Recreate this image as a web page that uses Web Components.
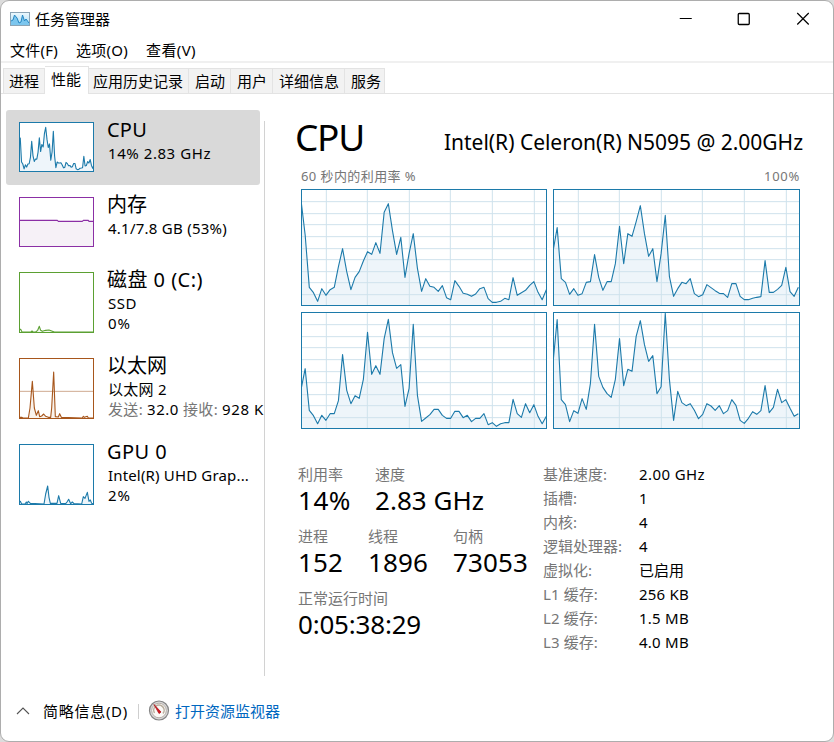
<!DOCTYPE html>
<html lang="zh-CN">
<head>
<meta charset="utf-8">
<title>任务管理器</title>
<style>
  body {
    margin: 0;
    background: #dcdcdc;
    font: 15px/20px "Noto Sans", "Noto Sans CJK SC", sans-serif;
    color: #000;
  }
</style>
</head>
<body>
<task-manager></task-manager>

<script>
// Samples of the last 60 seconds, one list for each logical processor.
// Counted downwards in thirds of a pixel, 13 is 100% and 361 is 0%
const cores = [
  [45,150,307,323,349,311,331,314,307,245,191,260,314,277,260,228,200,208,173,205,
   82,56,137,208,157,277,205,146,250,319,281,304,307,319,302,338,344,287,304,325,
   328,334,327,311,307,341,352,352,349,340,344,278,331,323,316,301,290,322,344,314],
  [200,128,281,292,328,311,331,326,292,290,209,277,316,290,290,236,124,236,146,154,
   110,62,146,214,191,290,206,91,275,334,311,292,296,281,326,335,329,299,308,317,
   325,326,337,296,296,334,344,344,340,337,335,227,322,322,313,301,247,320,334,307],
  [245,182,307,323,347,322,337,317,317,278,140,247,287,263,271,214,73,199,173,199,
   92,34,134,181,170,295,241,49,262,340,330,320,304,304,322,331,331,310,310,329,
   322,341,331,331,317,350,344,355,347,344,344,274,317,328,287,314,290,325,347,325],
  [165,35,275,290,341,308,316,272,304,226,49,205,238,257,268,214,92,233,184,190,
   85,38,110,160,143,257,236,16,215,337,250,284,293,287,307,332,319,287,294,307,
   293,317,308,275,292,337,346,331,311,319,308,233,314,298,244,284,275,301,325,317],
];

const corePoints = (core) =>
  core.map((y, i) => `${((i * 736) / 59).toFixed(1)},${y - 12}`).join(' ');

// The small CPU graph is the mean of all cores
const meanPoints = cores[0]
  .map((_, i) => {
    const mean = cores.reduce((sum, core) => sum + core[i], 0) / cores.length;
    return `${((i * 225) / 59).toFixed(1)},${(149 - ((361 - mean) / 348) * 148).toFixed(1)}`;
  })
  .join(' ');

class UsageChart extends HTMLElement {
  constructor() {
    super();
    this.attachShadow({ mode: 'open' });
  }

  connectedCallback() {
    const w = Number(this.getAttribute('w')) * 3;
    const h = Number(this.getAttribute('h')) * 3;
    const points = this.getAttribute('points');
    let grid = '';
    if (this.hasAttribute('grid')) {
      for (const x of [76, 199, 325, 448, 574, 700]) grid += `M${x} 0V${h}`;
      for (const y of [38, 74, 107, 143, 179, 212, 248, 281, 317]) grid += `M0 ${y}H${w}`;
    }
    if (this.hasAttribute('line')) grid += `M0 ${this.getAttribute('line')}H${w}`;

    this.shadowRoot.innerHTML = `
      <style>
      :host {
        display: block;
        flex: none;
        box-sizing: border-box;
        width: ${w / 3}px;
        height: ${h / 3}px;
        border: 1px solid var(--line, #1c7aaa);
        background: #fff;
      }
      svg { display: block; width: 100%; height: 100%; }
      .grid { stroke: var(--grid, #cfe2ec); stroke-width: 3; fill: none; }
      .area { fill: var(--area, #1177bb); fill-opacity: .07; }
      .line { fill: none; stroke: var(--line, #1c7aaa); stroke-width: 3.3; stroke-linejoin: round; }
      </style>
      <svg viewBox="3 3 ${w - 6} ${h - 6}" preserveAspectRatio="none">
        <polygon class="area" points="0,${h} ${points} ${w},${h}"/>
        <path class="grid" d="${grid}"/>
        <polyline class="line" points="${points}"/>
      </svg>`;
  }
}
customElements.define('usage-chart', UsageChart);

class TitleBar extends HTMLElement {
  constructor() {
    super();
    this.attachShadow({ mode: 'open' }).innerHTML = `
      <style>
      :host { display: flex; align-items: center; height: 36px; padding-left: 9px; }
      .app { margin-right: 5px; }
      .buttons { margin-left: auto; display: flex; }
      .buttons svg { width: 58.5px; height: 20px; }
      .buttons { padding-right: 1px; }
      </style>
      <svg class="app" width="20" height="14" viewBox="0 0 20 14">
        <defs><linearGradient id="g" x1="0" y1="0" x2="0" y2="1">
          <stop offset="0" stop-color="#eef9fe"/><stop offset="1" stop-color="#a9dcf5"/>
        </linearGradient></defs>
        <rect x=".5" y=".5" width="19" height="13" fill="url(#g)" stroke="#8ba4b5"/>
        <path d="M1 13V9L3 8L4.500 3L7 6L9 11L11 10L12.500 3L14.500 9L16 7L19 11V13Z" fill="#7cc6ee"/>
        <path d="M1 9L3 8L4.500 3L7 6L9 11L11 10L12.500 3L14.500 9L16 7L19 11" fill="none" stroke="#2487c3"/>
      </svg>
      <slot></slot>
      <div class="buttons">
        <svg viewBox="0 0 58 20"><path d="M22.500 9.500H34.500" stroke="#000"/></svg>
        <svg viewBox="0 0 58 20"><rect x="23" y="4.500" width="11" height="11" rx="1" fill="none" stroke="#000" stroke-width="1.300"/></svg>
        <svg viewBox="0 0 58 20"><path d="M23 4L34.500 15.500M34.500 4L23 15.500" stroke="#000" stroke-width="1.200"/></svg>
      </div>`;
  }
}
customElements.define('title-bar', TitleBar);

class TabItem extends HTMLElement {
  constructor() {
    super();
    this.attachShadow({ mode: 'open' }).innerHTML = `
      <style>
      :host {
        display: block;
        box-sizing: border-box;
        height: 25px;
        padding: 2px 0 0 5px;
        border: 1px solid #e3e3e3;
        border-left-width: 0;
        border-bottom-width: 0;
        background: #f2f2f2;
        white-space: nowrap;
      }
      :host([selected]) { height: 28px; padding: 2px 0 0 6px; background: #fff; }
      </style>
      <slot></slot>`;
  }
}
customElements.define('tab-item', TabItem);

class ResourceItem extends HTMLElement {
  constructor() {
    super();
    this.attachShadow({ mode: 'open' }).innerHTML = `
      <style>
      :host {
        display: flex;
        box-sizing: border-box;
        height: 86px;
        padding: 12px 0 0 13px;
        gap: 14px;
        white-space: nowrap;
      }
      :host([short]) { height: 75px; }
      :host([selected]) { background: #d9d9d9; border-radius: 3px; }
      .name { font-size: 20px; line-height: 26px; margin: -5px 0 0 -1px; height: 26px; }
      .text { width: 152px; }
      </style>
      <slot name="chart"></slot>
      <div class="text">
        <div class="name"><slot name="name"></slot></div>
        <slot></slot>
      </div>`;
  }
}
customElements.define('resource-item', ResourceItem);

class StatBlock extends HTMLElement {
  constructor() {
    super();
    this.attachShadow({ mode: 'open' }).innerHTML = `
      <style>
      :host { display: block; height: 62px; white-space: nowrap; }
      .label { color: #767676; line-height: 20px; }
      .value { font-size: 26px; line-height: 32px; }
      </style>
      <div class="label"><slot name="label"></slot></div>
      <div class="value"><slot></slot></div>`;
  }
}
customElements.define('stat-block', StatBlock);

class StatusBar extends HTMLElement {
  constructor() {
    super();
    this.attachShadow({ mode: 'open' }).innerHTML = `
      <style>
      :host { display: flex; align-items: center; height: 60px; padding-left: 15px; }
      .arrow { margin-right: 13px; }
      .rule { width: 1px; height: 15px; margin: 0 10px; background: #cfcfcf; }
      .gauge { margin: -2px 5px 0 -1px; }
      .link { color: #0067c0; }
      </style>
      <svg class="arrow" width="14" height="10" viewBox="0 0 14 10"><path d="M1 8L7 2L13 8" fill="none" stroke="#555" stroke-width="1.100"/></svg>
      <slot></slot>
      <div class="rule"></div>
      <svg class="gauge" width="22" height="21" viewBox="0 0 21 21">
        <circle cx="10.500" cy="10.500" r="9.500" fill="#d8d8d8" stroke="#858585" stroke-width="1.200"/>
        <circle cx="10.500" cy="10.500" r="7.300" fill="#faf9f6" stroke="#aaa099" stroke-width=".8"/>
        <path d="M6 13A5.200 5.200 0 1 1 14.500 13.500" fill="none" stroke="#b9ae9e" stroke-width="1.500"/>
        <path d="M5.500 4.500L12.500 12L10.500 13.500Z" fill="#d4141c" stroke="#b01820" stroke-width=".8"/>
      </svg>
      <span class="link"><slot name="link"></slot></span>`;
  }
}
customElements.define('status-bar', StatusBar);

class TaskManager extends HTMLElement {
  constructor() {
    super();
    this.attachShadow({ mode: 'open' }).innerHTML = `
      <style>
      :host {
        display: flex;
        flex-direction: column;
        box-sizing: border-box;
        width: 834px;
        height: 742px;
        border: 1px solid #adadad;
        border-radius: 9px;
        background: #fff;
        overflow: hidden;
      }
      .menu { display: flex; gap: 18px; height: 21px; padding: 3px 0 0 9px; border-bottom: 2px solid #f0f0f0; }
      .tabs { display: flex; align-items: flex-end; height: 30px; padding-left: 2px; border-bottom: 1px solid #e3e3e3; }
      .tabs tab-item[selected] { margin-bottom: -1px; }
      .body { display: flex; height: 587px; }
      .side { width: 254px; padding: 16px 0 0 5px; }
      .divider { width: 1px; height: 555px; margin: 27px 0 0 4px; background: #d2d2d2; }
      .main { width: 508px; padding-left: 30px; }
      .head { display: flex; justify-content: space-between; height: 72px; align-items: flex-start; }
      .head .big { font-size: 37px; line-height: 50px; margin-top: 18px; }
      .head .model { font-size: 21px; line-height: 30px; margin-top: 33px; }
      .axis { display: flex; justify-content: space-between; margin-left: 6px; width: 499px; height: 23px; font-size: 13px; color: #767676; }
      .charts { display: grid; grid-template-columns: 246px 247px; gap: 6px; margin-left: 6px; }
      .info { display: flex; padding: 35px 0 0 3px; }
      .stats { width: 245px; }
      .row { display: flex; }
      dl { margin: 0; display: grid; grid-template-columns: 96px 90px; grid-auto-rows: 24px; white-space: nowrap; }
      dt, .gray { color: #767676; }
      dd { margin: 0; }
      </style>
      <title-bar>任务管理器</title-bar>
      <div class="menu">
        <fit-text w="48">文件(F)</fit-text><fit-text w="52">选项(O)</fit-text><fit-text w="50">查看(V)</fit-text>
      </div>
      <div class="tabs">
        <tab-item style="width:42px; border-left-width:1px">进程</tab-item>
        <tab-item selected style="width:44px">性能</tab-item>
        <tab-item style="width:100px; padding-left:4px">应用历史记录</tab-item>
        <tab-item style="width:42px; padding-left:6px">启动</tab-item>
        <tab-item style="width:42px; padding-left:6px">用户</tab-item>
        <tab-item style="width:72px; padding-left:6px">详细信息</tab-item>
        <tab-item style="width:40px; padding-left:6px">服务</tab-item>
      </div>
      <div class="body">
        <div class="side">
          <resource-item short selected>
            <usage-chart slot="chart" w="75" h="50" points="${meanPoints}"></usage-chart>
            <fit-text slot="name" w="40">CPU</fit-text>
            <fit-text w="103">14% 2.83 GHz</fit-text>
          </resource-item>
          <resource-item short>
            <usage-chart slot="chart" w="75" h="50" style="--line:#8b2fa5;--area:#7a3591"
              points="0,70 115,70 118,73 190,73 193,70 208,70 210,73 225,73"></usage-chart>
            <fit-text slot="name" w="40">内存</fit-text>
            <fit-text w="119">4.1/7.8 GB (53%)</fit-text>
          </resource-item>
          <resource-item>
            <usage-chart slot="chart" w="75" h="61" style="--line:#5ba032;--area:#4da60c"
              points="0,172 5,172 9,180 36,180 39,177 42,180 50,180 56,175 61,163 65,175 70,178 80,175 90,174 98,177 106,180 225,180"></usage-chart>
            <fit-text slot="name" w="96">磁盘 0 (C:)</fit-text>
            <fit-text w="29">SSD</fit-text><br>
            <fit-text w="23">0%</fit-text>
          </resource-item>
          <resource-item>
            <usage-chart slot="chart" w="75" h="61" line="100" style="--line:#a7561c;--area:#a74f01;--grid:#cfaa91"
              points="0,178 8,178 12,180 28,180 33,150 40,70 46,150 52,172 58,158 62,176 68,174 74,168 80,175 88,178 95,178 98,150 104,42 109,176 118,177 122,167 127,178 190,180 193,175 196,178 205,175 208,180 225,180"></usage-chart>
            <fit-text slot="name" w="60">以太网</fit-text>
            <fit-text w="59">以太网 2</fit-text><br>
            <fit-text class="gray" w="35">发送:</fit-text><fit-text w="32" style="padding:0 4px">32.0</fit-text><fit-text class="gray" w="35">接收:</fit-text><fit-text w="42" style="padding-left:4px">928 K</fit-text>
          </resource-item>
          <resource-item>
            <usage-chart slot="chart" w="75" h="61"
              points="0,172 4,172 8,180 18,180 22,174 24,179 28,172 34,178 75,180 80,150 86,126 90,160 94,178 114,178 119,155 125,178 140,179 144,174 149,166 155,179 160,174 165,179 188,180 193,158 198,163 205,145 210,172 214,168 218,178 225,180"></usage-chart>
            <fit-text slot="name" w="60">GPU 0</fit-text>
            <fit-text w="141">Intel(R) UHD Grap...</fit-text><br>
            <fit-text w="23">2%</fit-text>
          </resource-item>
        </div>
        <div class="divider"></div>
        <div class="main">
          <div class="head">
            <fit-text class="big" w="69">CPU</fit-text>
            <fit-text class="model" w="359">Intel(R) Celeron(R) N5095 @ 2.00GHz</fit-text>
          </div>
          <div class="axis"><fit-text w="115">60 秒内的利用率 %</fit-text><fit-text w="36">100%</fit-text></div>
          <div class="charts">
            ${cores
              .map((core, i) => `<usage-chart grid w="${246 + (i % 2)}" h="117" points="${corePoints(core)}"></usage-chart>`)
              .join('')}
          </div>
          <div class="info">
            <div class="stats">
              <div class="row">
                <stat-block style="width:77px"><span slot="label">利用率</span><fit-text w="53">14%</fit-text></stat-block>
                <stat-block><span slot="label">速度</span><fit-text w="109">2.83 GHz</fit-text></stat-block>
              </div>
              <div class="row">
                <stat-block style="width:70px"><span slot="label">进程</span><fit-text w="45">152</fit-text></stat-block>
                <stat-block style="width:85px"><span slot="label">线程</span><fit-text w="60">1896</fit-text></stat-block>
                <stat-block><span slot="label">句柄</span><fit-text w="75">73053</fit-text></stat-block>
              </div>
              <stat-block><span slot="label">正常运行时间</span><fit-text w="123">0:05:38:29</fit-text></stat-block>
            </div>
            <dl>
              <dt><fit-text w="64">基准速度:</fit-text></dt><dd><fit-text w="66">2.00 GHz</fit-text></dd>
              <dt><fit-text w="34">插槽:</fit-text></dt><dd>1</dd>
              <dt><fit-text w="34">内核:</fit-text></dt><dd>4</dd>
              <dt><fit-text w="79">逻辑处理器:</fit-text></dt><dd>4</dd>
              <dt><fit-text w="49">虚拟化:</fit-text></dt><dd>已启用</dd>
              <dt><fit-text w="55">L1 缓存:</fit-text></dt><dd><fit-text w="50">256 KB</fit-text></dd>
              <dt><fit-text w="55">L2 缓存:</fit-text></dt><dd><fit-text w="50">1.5 MB</fit-text></dd>
              <dt><fit-text w="55">L3 缓存:</fit-text></dt><dd><fit-text w="50">4.0 MB</fit-text></dd>
            </dl>
          </div>
        </div>
      </div>
      <status-bar><fit-text w="85">简略信息(D)</fit-text><span slot="link">打开资源监视器</span></status-bar>`;
  }
}
customElements.define('task-manager', TaskManager);

// Spreads its text over exactly 'w' pixels. Has to be defined last, because it
// measures with the font size that the elements around it give to their slots
class FitText extends HTMLElement {
  constructor() {
    super();
    this.attachShadow({ mode: 'open' }).innerHTML = `
      <style>
      :host { display: inline-block; white-space: nowrap; vertical-align: top; }
      span { display: inline-block; vertical-align: top; }
      </style>
      <span><slot></slot></span>`;
  }

  connectedCallback() {
    const w = Number(this.getAttribute('w'));
    const span = this.shadowRoot.querySelector('span');
    const natural = span.getBoundingClientRect().width;
    span.style.letterSpacing = `${(w - natural) / this.textContent.trim().length}px`;
    this.style.width = `${w}px`;
  }
}
customElements.define('fit-text', FitText);
</script>
</body>
</html>
